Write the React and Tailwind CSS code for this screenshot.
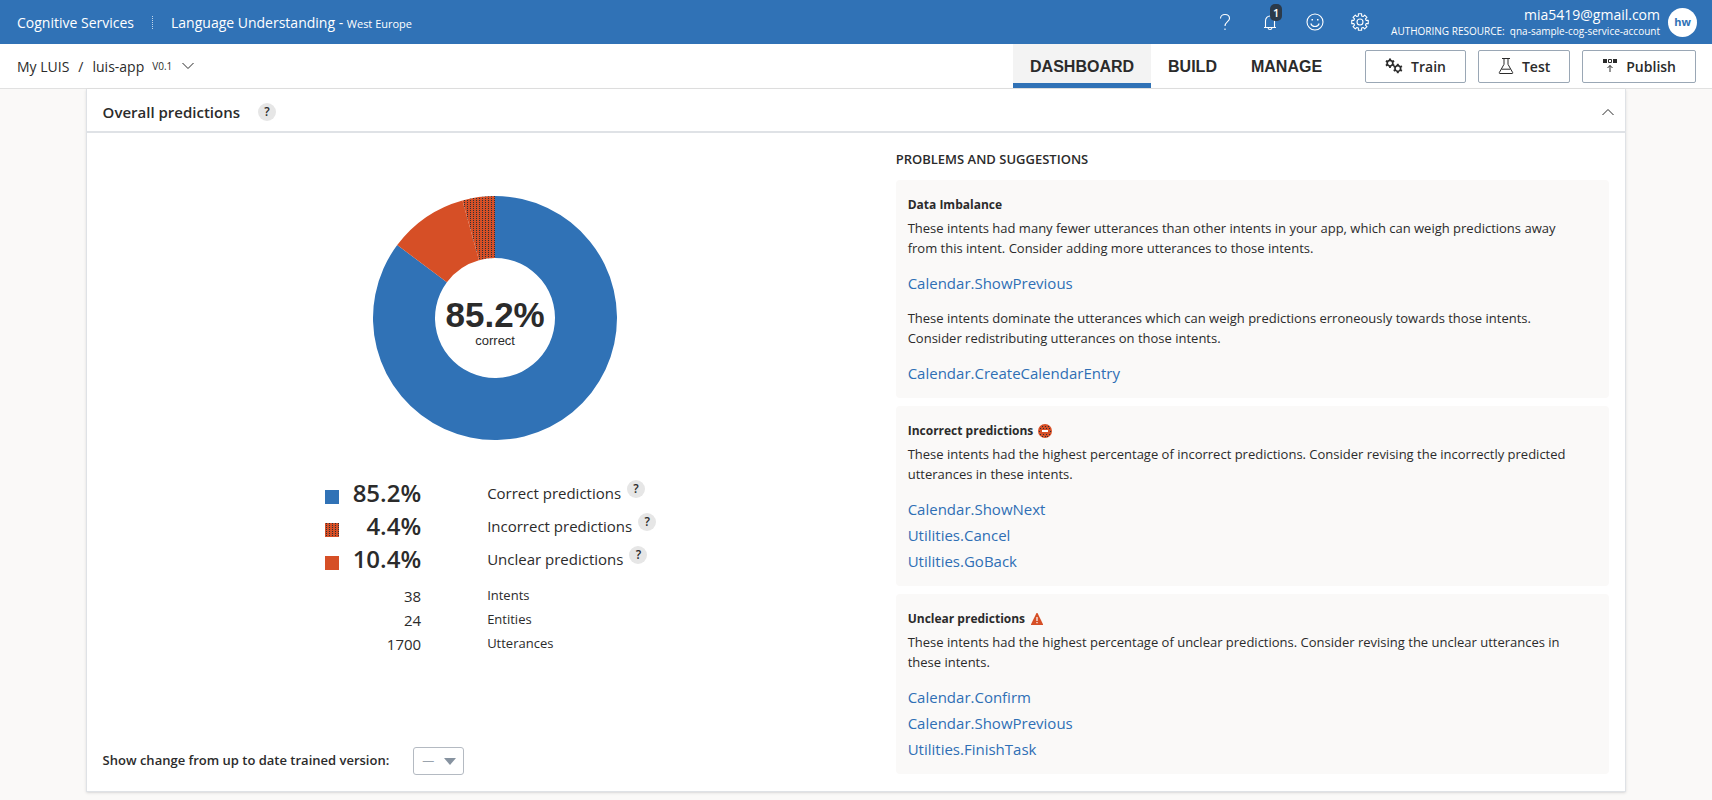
import { useState } from "react";

const BODY = "font-['Open_Sans','Noto_Sans',sans-serif]";
const ARIAL = "font-['Liberation_Sans',Arial,sans-serif]";

function Help({ label }) {
  return (
    <button
      type="button"
      aria-label={label}
      className="inline-flex size-[18px] shrink-0 items-center justify-center rounded-full bg-[#e6e6e6] text-[12px] leading-[18px] font-semibold text-[#2b2b2b]"
    >
      ?
    </button>
  );
}

function DotPattern({ id }) {
  return (
    <pattern id={id} width="3" height="2" patternUnits="userSpaceOnUse">
      <rect width="3" height="2" fill="#d64f26" />
      <rect x="1" y="0" width="1" height="1" fill="#2b3038" />
    </pattern>
  );
}

function arc(from, to, r0 = 60, r1 = 122) {
  const c = 122;
  const pt = (t, r) => {
    const a = t * 2 * Math.PI;
    return `${c + r * Math.sin(a)} ${c - r * Math.cos(a)}`;
  };
  const large = to - from > 0.5 ? 1 : 0;
  return `M${pt(from, r1)}A${r1} ${r1} 0 ${large} 1 ${pt(to, r1)}L${pt(to, r0)}A${r0} ${r0} 0 ${large} 0 ${pt(from, r0)}Z`;
}

function Donut() {
  return (
    <div className="grid place-items-center">
      <svg
        viewBox="0 0 244 244"
        className="col-start-1 row-start-1 size-[244px]"
        role="img"
        aria-label="Prediction breakdown"
      >
        <defs>
          <DotPattern id="dots-donut" />
        </defs>
        <path d={arc(0, 0.852)} fill="#3072b6" />
        <path d={arc(0.852, 0.957)} fill="#d64f26" />
        <path d={arc(0.957, 1)} fill="url(#dots-donut)" />
      </svg>
      <div className={`col-start-1 row-start-1 pt-[10px] text-center text-[#2b2b2b] ${ARIAL}`}>
        <div className="text-[35px] leading-9 font-bold">85.2%</div>
        <div className="text-[13px] leading-4">correct</div>
      </div>
    </div>
  );
}

function Swatch({ kind }) {
  return (
    <svg viewBox="0 0 14 14" className="mt-2 size-[14px]" aria-hidden="true">
      <defs>
        <DotPattern id={`dots-${kind}`} />
      </defs>
      <rect
        width="14"
        height="14"
        fill={kind === "correct" ? "#3072b6" : kind === "unclear" ? "#d64f26" : `url(#dots-${kind})`}
      />
    </svg>
  );
}

const RATES = [
  ["correct", "85.2%", "Correct predictions"],
  ["incorrect", "4.4%", "Incorrect predictions"],
  ["unclear", "10.4%", "Unclear predictions"],
];
const COUNTS = [
  ["38", "Intents"],
  ["24", "Entities"],
  ["1700", "Utterances"],
];

function Legend() {
  return (
    <div className="mx-auto w-[340px]">
      {RATES.map(([kind, value, label]) => (
        <div key={kind} className="grid h-[33px] grid-cols-[14px_82px_1fr] items-center">
          <Swatch kind={kind} />
          <span className="text-right text-[24px] leading-8 font-semibold">{value}</span>
          <span className="flex items-center gap-[6px] pl-[66px] text-[15px] leading-6 whitespace-nowrap">
            {label}
            <span className="-mt-2 flex">
              <Help label={`About ${label.toLowerCase()}`} />
            </span>
          </span>
        </div>
      ))}
      <div className="pt-[9px]">
        {COUNTS.map(([value, label]) => (
          <div key={label} className="grid h-6 grid-cols-[96px_1fr] items-center">
            <span className="text-right text-[15px]">{value}</span>
            <span className="pl-[66px] text-[13px]">{label}</span>
          </div>
        ))}
      </div>
    </div>
  );
}

function Para({ children }) {
  return <p className="pr-4 text-[13px] leading-5">{children}</p>;
}

function Links({ items }) {
  return (
    <ul className="mt-3 text-[15px]">
      {items.map((t) => (
        <li key={t} className="leading-[26px]">
          <a href="#" className="text-[#2f6fb5]">{t}</a>
        </li>
      ))}
    </ul>
  );
}

function Suggestion({ title, icon, children }) {
  return (
    <section className="rounded bg-[#faf9f8] px-3 pt-[15px] pb-3">
      <h3 className="mb-[3px] flex items-center gap-[5px] text-[12px] leading-5 font-bold">
        {title}
        {icon}
      </h3>
      {children}
    </section>
  );
}

function IncorrectIcon() {
  return (
    <svg viewBox="0 0 14 14" className="size-[14px]" aria-hidden="true">
      <circle cx="7" cy="7" r="7" fill="#d64f26" />
      {[
        [4, 2], [7, 2], [10, 2], [2, 4], [5, 4], [8, 4], [11, 4], [1, 7], [12, 7],
        [2, 10], [5, 10], [8, 10], [11, 10], [4, 12], [7, 12], [9, 12],
      ].map(([x, y]) => (
        <rect key={`${x}-${y}`} x={x} y={y} width="1" height="1" fill="#2b3038" />
      ))}
      <rect x="4" y="6" width="6" height="2" fill="#fff" />
    </svg>
  );
}

function UnclearIcon() {
  return (
    <svg viewBox="0 0 14 14" className="size-[14px]" aria-hidden="true">
      <path d="M6.5 1h1l5.5 11.2v.8H1v-.8z" fill="#d64f26" />
      <path d="M6.4 5h1.2v4H6.4zM6.4 10h1.2v1.3H6.4z" fill="#fff" />
    </svg>
  );
}

function GearIcon() {
  const teeth = 8;
  const pts = [];
  for (let i = 0; i < teeth; i++) {
    const a = (i / teeth) * 2 * Math.PI;
    const w = Math.PI / teeth;
    [
      [-0.66, 6.3],
      [-0.5, 8.4],
      [0.5, 8.4],
      [0.66, 6.3],
    ].forEach(([k, r]) => {
      const b = a + k * w;
      pts.push(`${(9 + r * Math.sin(b)).toFixed(2)},${(9 - r * Math.cos(b)).toFixed(2)}`);
    });
  }
  return (
    <svg viewBox="0 0 18 18" className="size-[18px]" fill="none" stroke="currentColor" strokeWidth="1.1" strokeLinejoin="round" aria-hidden="true">
      <polygon points={pts.join(" ")} />
      <circle cx="9" cy="9" r="3" />
    </svg>
  );
}

function TrainIcon() {
  const spokes = [0, 60, 120, 180, 240, 300];
  const gear = (cx, cy) => (
    <g transform={`translate(${cx} ${cy})`}>
      <circle r="2.8" fill="none" stroke="currentColor" strokeWidth="1.7" />
      {spokes.map((d) => (
        <rect key={d} x="-1" y="-4.7" width="2" height="1.7" fill="currentColor" transform={`rotate(${d})`} />
      ))}
    </g>
  );
  return (
    <svg viewBox="0 0 18 16" className="h-4 w-[18px]" aria-hidden="true">
      {gear(5, 5.2)}
      {gear(12.8, 10.5)}
    </svg>
  );
}

function FlaskIcon() {
  return (
    <svg viewBox="0 0 16 18" className="h-[18px] w-4" fill="none" stroke="currentColor" strokeWidth="1" aria-hidden="true">
      <path d="M4 1.5h8M6 1.5v5.800L1.300 15.600q-.3.9.6.9h12.200q.9 0 .6-.9L10 7.300V1.500M3.600 12.200h8.800" />
    </svg>
  );
}

function PublishIcon() {
  return (
    <svg viewBox="0 0 16 16" className="size-4" aria-hidden="true">
      <path d="M1 1h4v4H1zM11 1h4v4h-4z" fill="currentColor" />
      <path d="M6.500 1.500h3v3h-3zM8 14V7.500M5.500 10 8 7.500 10.500 10" fill="none" stroke="currentColor" />
    </svg>
  );
}

function ActionButton({ icon, children }) {
  return (
    <button type="button" className="flex h-[33px] items-center gap-2 rounded-[2px] border border-[#9aa7b5] bg-white px-[19px] text-[14px] font-semibold">
      {icon}
      {children}
    </button>
  );
}

function TopBar() {
  return (
    <header className="flex h-11 items-center bg-[#3072b6] pr-[15px] pl-[17px] text-white">
      <a href="#" className="text-[14px]">Cognitive Services</a>
      <span className="mx-[18px] h-[13px] border-l border-dotted border-white/70" />
      <a href="#" className="text-[14px]">
        Language Understanding - <span className="text-[11px]">West Europe</span>
      </a>
      <div className="ml-auto flex items-center gap-[27px]">
        <button type="button" aria-label="Help" className="flex">
          <svg viewBox="0 0 18 18" className="size-[18px]" fill="none" stroke="currentColor" strokeWidth="1.1" aria-hidden="true">
            <path d="M4.500 5.500C4.500 3 6.300 1.500 9 1.500s4.500 1.500 4.500 4c0 3-4.500 3.500-4.500 7.500M9 15.500v1.500" />
          </svg>
        </button>
        <button type="button" aria-label="Notifications" className="relative flex">
          <svg viewBox="0 0 18 18" className="size-[18px]" fill="none" stroke="currentColor" strokeWidth="1.1" aria-hidden="true">
            <path d="M4.500 14.500V8c0-3 2-5 4.500-5s4.500 2 4.500 5v6.500M3 14.500h12M7 14.700c.3 2.400 3.700 2.400 4 0" />
          </svg>
          <span className="absolute -top-[9px] left-[9px] h-[17px] w-3 rounded-[5px] bg-[#2b3a4a] text-center text-[11px] leading-[17px] font-semibold text-white">1</span>
        </button>
        <button type="button" aria-label="Feedback" className="flex">
          <svg viewBox="0 0 18 18" className="size-[18px]" fill="none" stroke="currentColor" strokeWidth="1.1" aria-hidden="true">
            <circle cx="9" cy="9" r="8" />
            <path d="M4.800 10.500c1.300 4 7.100 4 8.400 0" />
            <path d="M5.500 6h1.500v1.500H5.500zM11 6h1.500v1.500H11z" fill="currentColor" stroke="none" />
          </svg>
        </button>
        <button type="button" aria-label="Settings" className="flex">
          <GearIcon />
        </button>
      </div>
      <div className="ml-[22px] flex items-center gap-2">
        <div className="pt-[2px] text-right">
          <div className="text-[14px] leading-4">mia5419@gmail.com</div>
          <div className="text-[10px] leading-4">AUTHORING RESOURCE: &nbsp;qna-sample-cog-service-account</div>
        </div>
        <button type="button" className="flex size-[29px] items-center justify-center rounded-full bg-white text-[11px] font-bold text-[#3072b6]">hw</button>
      </div>
    </header>
  );
}

function NavBar() {
  const [tab, setTab] = useState("DASHBOARD");
  return (
    <div className="flex h-[45px] items-center border-b border-[#e1e1e1] bg-white pr-4 pl-[17px]">
      <nav className="flex items-center text-[14px]">
        <a href="#">My LUIS</a>
        <span className="mx-[9px]">/</span>
        <a href="#">luis-app</a>
        <button type="button" aria-label="Choose version" className="ml-2 flex items-center gap-[9px]">
          <span className="text-[10px]">V0.1</span>
          <svg viewBox="0 0 14 8" className="h-2 w-[14px]" fill="none" stroke="currentColor" aria-hidden="true">
            <path d="M1.500 1 7 6.500 12.500 1" />
          </svg>
        </button>
      </nav>
      <div className={`ml-auto flex self-stretch ${ARIAL}`}>
        {["DASHBOARD", "BUILD", "MANAGE"].map((t) => (
          <button
            key={t}
            type="button"
            onClick={() => setTab(t)}
            className={`border-b-[5px] px-[17px] pt-[6px] text-[16px] font-bold ${tab === t ? "border-[#3072b6] bg-[#f3f3f3]" : "border-transparent"}`}
          >
            {t}
          </button>
        ))}
      </div>
      <div className="ml-[26px] flex gap-3">
        <ActionButton icon={<TrainIcon />}>Train</ActionButton>
        <ActionButton icon={<FlaskIcon />}>Test</ActionButton>
        <ActionButton icon={<PublishIcon />}>Publish</ActionButton>
      </div>
    </div>
  );
}

export default function App() {
  return (
    <div className={`min-h-screen bg-[#faf9f8] text-[#2b2b2b] ${BODY}`}>
      <TopBar />
      <NavBar />
      <main className="px-[5%] pb-2">
        <div className="border border-t-0 border-[#dfe2e6] bg-white shadow-sm">
          <div className="flex h-11 items-center border-b-2 border-[#dfe2e6] pt-1 pr-[10px] pl-4">
            <h2 className="text-[15px] font-semibold">Overall predictions</h2>
            <span className="ml-[18px] flex">
              <Help label="About overall predictions" />
            </span>
            <button type="button" aria-label="Collapse section" className="ml-auto">
              <svg viewBox="0 0 14 8" className="h-2 w-[14px]" fill="none" stroke="currentColor" aria-hidden="true">
                <path d="M1.500 7 7 1.500 12.500 7" />
              </svg>
            </button>
          </div>
          <div className="grid grid-cols-[11fr_10fr] gap-2 px-4 py-4">
            <div className="flex flex-col pt-[47px]">
              <Donut />
              <div className="mt-9">
                <Legend />
              </div>
              <div className="mt-auto flex items-center gap-6">
                <label htmlFor="version" className="text-[13px] font-semibold">Show change from up to date trained version:</label>
                <div className="grid items-center">
                  <select id="version" className="col-start-1 row-start-1 h-7 w-[51px] appearance-none rounded-[3px] border border-[#b4bac2] bg-white pl-2 text-[12px] text-[#9aa3ad]">
                    <option>—</option>
                  </select>
                  <svg viewBox="0 0 12 7" className="pointer-events-none col-start-1 row-start-1 mr-2 h-[7px] w-3 justify-self-end" aria-hidden="true">
                    <path d="M0 0h12L6 7z" fill="#8793a0" />
                  </svg>
                </div>
              </div>
            </div>
            <div className="pb-px">
              <h3 className="mb-[11px] text-[13px] leading-5 font-semibold">PROBLEMS AND SUGGESTIONS</h3>
              <div className="flex flex-col gap-2">
                <Suggestion title="Data Imbalance">
                  <Para>These intents had many fewer utterances than other intents in your app, which can weigh predictions away from this intent. Consider adding more utterances to those intents.</Para>
                  <Links items={["Calendar.ShowPrevious"]} />
                  <div className="pt-3">
                    <Para>These intents dominate the utterances which can weigh predictions erroneously towards those intents. Consider redistributing utterances on those intents.</Para>
                    <Links items={["Calendar.CreateCalendarEntry"]} />
                  </div>
                </Suggestion>
                <Suggestion title="Incorrect predictions" icon={<IncorrectIcon />}>
                  <Para>These intents had the highest percentage of incorrect predictions. Consider revising the incorrectly predicted utterances in these intents.</Para>
                  <Links items={["Calendar.ShowNext", "Utilities.Cancel", "Utilities.GoBack"]} />
                </Suggestion>
                <Suggestion title="Unclear predictions" icon={<UnclearIcon />}>
                  <Para>These intents had the highest percentage of unclear predictions. Consider revising the unclear utterances in these intents.</Para>
                  <Links items={["Calendar.Confirm", "Calendar.ShowPrevious", "Utilities.FinishTask"]} />
                </Suggestion>
              </div>
            </div>
          </div>
        </div>
      </main>
    </div>
  );
}
